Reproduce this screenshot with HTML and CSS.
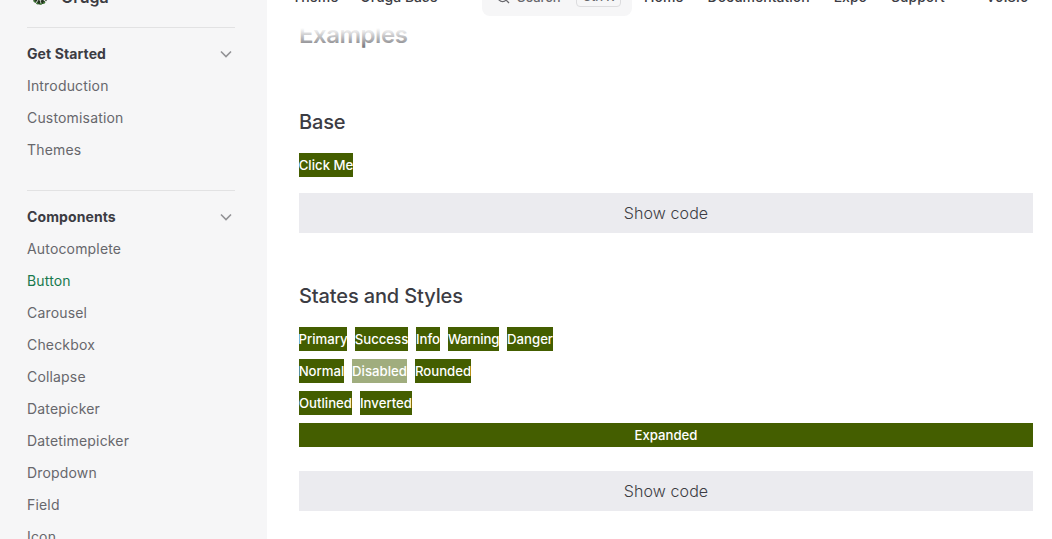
FILE: index.html
```html
<!DOCTYPE html>
<html lang="en">
<head>
<meta charset="utf-8">
<title>Button | Oruga</title>
<link rel="stylesheet" href="styles.css">
</head>
<body>
<div class="layout">
  <aside class="sidebar">
    <div class="brand">
      <svg class="logo" viewBox="0 0 24 24"><circle cx="12" cy="12" r="5.5" fill="none" stroke="#23351f" stroke-width="4" stroke-dasharray="3.2 .8"/><path d="M6 15.5a7 7 0 0 0 11.5 1" fill="none" stroke="#3f7a35" stroke-width="1.6" stroke-dasharray="2 1.5"/></svg>
      <span>Oruga</span>
    </div>
    <section class="group">
      <h2 class="group-title"><span>Get Started</span><svg class="chevron" viewBox="0 0 12 12"><path d="M1 3.5 6 8.5 11 3.5"/></svg></h2>
      <a class="link">Introduction</a>
      <a class="link">Customisation</a>
      <a class="link">Themes</a>
    </section>
    <section class="group">
      <h2 class="group-title"><span>Components</span><svg class="chevron" viewBox="0 0 12 12"><path d="M1 3.5 6 8.5 11 3.5"/></svg></h2>
      <a class="link">Autocomplete</a>
      <a class="link active">Button</a>
      <a class="link">Carousel</a>
      <a class="link">Checkbox</a>
      <a class="link">Collapse</a>
      <a class="link">Datepicker</a>
      <a class="link">Datetimepicker</a>
      <a class="link">Dropdown</a>
      <a class="link">Field</a>
      <a class="link">Icon</a>
    </section>
  </aside>
  <div class="page">
    <header class="topbar">
      <span class="theme-label">Theme</span>
      <span class="theme-value">Oruga Base</span>
      <div class="search">
        <svg class="search-icon" viewBox="0 0 20 20"><path d="m14.4 14.4 4.2 4.2M14.4 14.4A7 7 0 1 1 14.4 4.5a7 7 0 0 1 0 9.9Z"/></svg>
        <span class="search-text">Search</span>
        <kbd class="keys">Ctrl K</kbd>
      </div>
      <nav class="menu">
        <a>Home</a><a>Documentation</a><a>Expo</a><a>Support</a><a class="version">v0.8.0</a>
      </nav>
    </header>
    <main class="content">
      <div class="curtain"></div>
      <h2 class="heading">Examples</h2>
      <h3 class="subheading">Base</h3>
      <div class="row"><button class="btn w54">Click Me</button></div>
      <button class="show-code base-code">Show code</button>
      <h3 class="subheading">States and Styles</h3>
      <div class="row"><button class="btn w48">Primary</button><button class="btn w53">Success</button><button class="btn w24">Info</button><button class="btn w51">Warning</button><button class="btn w46">Danger</button></div>
      <div class="row"><button class="btn w45">Normal</button><button class="btn w55 disabled">Disabled</button><button class="btn w56">Rounded</button></div>
      <div class="row"><button class="btn w53">Outlined</button><button class="btn w52">Inverted</button></div>
      <div class="row"><button class="btn expanded">Expanded</button></div>
      <button class="show-code states-code">Show code</button>
    </main>
  </div>
</div>
</body>
</html>
```
FILE: styles.css
```css
* { box-sizing: border-box; }
body { margin: 0; font-family: Inter, "Liberation Sans", sans-serif; color: #3c3c43; background: #fff; }
h2, h3 { margin: 0; }
button { font: inherit; border: 0; padding: 0; border-radius: 0; }
.layout { display: grid; grid-template-columns: 267px minmax(0, 1fr); height: 539px; overflow: hidden; }

.sidebar { background: #f6f6f7; padding: 0 32px 0 27px; overflow: hidden; }
.brand { display: flex; align-items: center; gap: 9px; height: 64px; margin-top: -36px; padding: 1px 0 0 1px; font-size: 16px; font-weight: 600; }
.logo { width: 24px; height: 24px; }
.group { border-top: 1px solid #e2e2e3; padding-top: 10px; margin-bottom: 24px; }
.brand + .group { margin-top: -1px; }
.group-title { display: flex; align-items: center; justify-content: space-between; height: 32px; padding-right: 3px; font-size: 14px; line-height: 32px; font-weight: 650; letter-spacing: .1px; }
.chevron { width: 12px; height: 12px; fill: none; stroke: #929295; stroke-width: 1.6; }
.link { display: block; height: 32px; line-height: 32px; font-size: 14px; letter-spacing: .17px; color: #67676c; }
.active { color: #18794e; }

.page { min-width: 0; overflow: hidden; }
.topbar { position: relative; z-index: 2; display: flex; align-items: center; height: 64px; margin-top: -36px; padding-left: 25px; background: #fff; font-size: 14px; font-weight: 500; white-space: nowrap; }
.theme-label { width: 68px; padding-top: 1px; }
.theme-value { width: 122px; padding-top: 1px; }
.search { display: flex; align-items: center; flex: none; width: 150px; height: 40px; padding: 0 11px 0 14px; border-radius: 8px; background: #f6f6f7; font-size: 13px; color: #67676c; }
.search-icon { width: 14px; height: 14px; margin: 1px 7px 0 0; fill: none; stroke: #67676c; stroke-width: 1.8; }
.search-text { padding-top: 1px; }
.keys { margin-left: auto; width: 45px; height: 22px; border: 1px solid #dcdcde; border-radius: 4px; font: 500 12px/22px Inter, sans-serif; text-align: center; }
.menu { display: flex; gap: 24px; padding: 1px 0 0 12px; }
.version { margin-left: 18px; }

.content { display: flow-root; position: relative; padding: 0 19px 0 32px; }
.curtain { position: absolute; top: 0; left: 0; right: 0; height: 28px; background: linear-gradient(#fff, rgba(255, 255, 255, 0)); }
.heading { height: 32px; margin-top: -9px; line-height: 32px; font-size: 24px; font-weight: 600; letter-spacing: -.48px; }
.subheading { margin: 32px 0 17px; line-height: 28px; font-size: 20px; font-weight: 550; letter-spacing: -.13px; }
.heading + .subheading { margin-top: 57px; }
.row { display: flex; gap: 8px; height: 24px; margin-bottom: 8px; }
.btn { display: flex; justify-content: center; height: 24px; background: #445e00; color: #fff; font-size: 13.2px; line-height: 24px; font-weight: 450; white-space: nowrap; }
.w24 { width: 24px; }
.w45 { width: 45px; }
.w46 { width: 46px; }
.w48 { width: 48px; }
.w51 { width: 51px; letter-spacing: -.2px; }
.w52 { width: 52px; }
.w53 { width: 53px; }
.w54 { width: 54px; }
.w55 { width: 55px; }
.w56 { width: 56px; }
.disabled { opacity: .5; }
.expanded { width: 100%; }
.show-code { display: block; width: 100%; height: 40px; background: #ebebef; color: #3c3c43; font-size: 16px; font-weight: 300; letter-spacing: .1px; }
.base-code { margin: 16px 0 49px; }
.states-code { margin-top: 24px; }
```
